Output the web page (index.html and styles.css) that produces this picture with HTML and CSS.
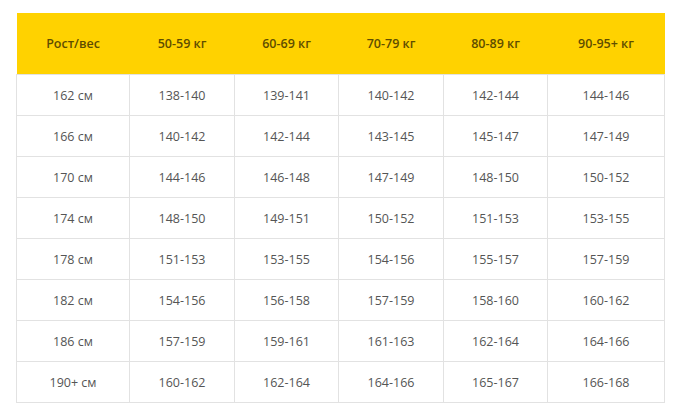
FILE: index.html
```html
<!DOCTYPE html>
<html>
<head>
<meta charset="utf-8">
<link rel="stylesheet" href="styles.css">
</head>
<body>
<div class="wrap">
<table class="sizes">
<colgroup>
<col class="c1"><col class="c2"><col class="c3"><col class="c4"><col class="c5"><col class="c6">
</colgroup>
<thead>
<tr><th>Рост/вес</th><th>50-59 кг</th><th>60-69 кг</th><th>70-79 кг</th><th>80-89 кг</th><th>90-95+ кг</th></tr>
</thead>
<tbody>
<tr><td>162 см</td><td>138-140</td><td>139-141</td><td>140-142</td><td>142-144</td><td>144-146</td></tr>
<tr><td>166 см</td><td>140-142</td><td>142-144</td><td>143-145</td><td>145-147</td><td>147-149</td></tr>
<tr><td>170 см</td><td>144-146</td><td>146-148</td><td>147-149</td><td>148-150</td><td>150-152</td></tr>
<tr><td>174 см</td><td>148-150</td><td>149-151</td><td>150-152</td><td>151-153</td><td>153-155</td></tr>
<tr><td>178 см</td><td>151-153</td><td>153-155</td><td>154-156</td><td>155-157</td><td>157-159</td></tr>
<tr><td>182 см</td><td>154-156</td><td>156-158</td><td>157-159</td><td>158-160</td><td>160-162</td></tr>
<tr><td>186 см</td><td>157-159</td><td>159-161</td><td>161-163</td><td>162-164</td><td>164-166</td></tr>
<tr><td>190+ см</td><td>160-162</td><td>162-164</td><td>164-166</td><td>165-167</td><td>166-168</td></tr>
</tbody>
</table>
</div>
</body>
</html>
```
FILE: styles.css
```css
html, body {
  margin: 0;
  padding: 0;
  background: #ffffff;
}
.wrap {
  padding: 13px 0 0 16px;
}
.sizes {
  border-collapse: collapse;
  table-layout: fixed;
  width: 648px;
  font-family: "Open Sans", "Noto Sans", sans-serif;
  font-size: 12.5px;
  color: #555555;
}
.c1 { width: 113px; }
.c2 { width: 105px; }
.c3 { width: 104px; }
.c4 { width: 105px; }
.c5 { width: 104px; }
.c6 { width: 117px; }
.sizes th {
  background: #ffd200;
  color: #5e4d00;
  font-weight: 600;
  height: 61px;
  padding: 0;
  text-align: center;
  border: none;
}
.sizes td {
  height: 40px;
  padding: 0;
  text-align: center;
  border: 1px solid #e2e2e2;
}
```
